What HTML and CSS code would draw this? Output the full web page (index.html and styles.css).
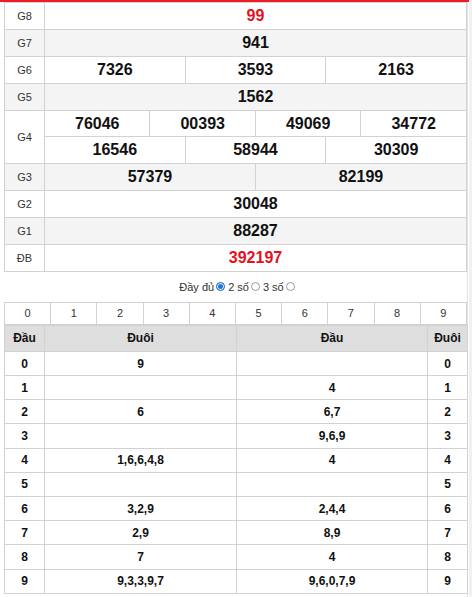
FILE: index.html
```html
<!DOCTYPE html>
<html>
<head>
<meta charset="utf-8">
<link rel="stylesheet" href="styles.css">
</head>
<body>
<div class="page">
  <div class="box">
    <table class="kq">
      <colgroup>
        <col class="lab">
        <col span="12">
      </colgroup>
      <tr><td class="g">G8</td><td colspan="12" class="num red">99</td></tr>
      <tr class="alt"><td class="g">G7</td><td colspan="12" class="num">941</td></tr>
      <tr><td class="g">G6</td><td colspan="4" class="num">7326</td><td colspan="4" class="num">3593</td><td colspan="4" class="num">2163</td></tr>
      <tr class="alt"><td class="g">G5</td><td colspan="12" class="num">1562</td></tr>
      <tr><td class="g" rowspan="2">G4</td><td colspan="3" class="num">76046</td><td colspan="3" class="num">00393</td><td colspan="3" class="num">49069</td><td colspan="3" class="num">34772</td></tr>
      <tr><td colspan="4" class="num">16546</td><td colspan="4" class="num">58944</td><td colspan="4" class="num">30309</td></tr>
      <tr class="alt"><td class="g">G3</td><td colspan="6" class="num">57379</td><td colspan="6" class="num">82199</td></tr>
      <tr><td class="g">G2</td><td colspan="12" class="num">30048</td></tr>
      <tr class="alt"><td class="g">G1</td><td colspan="12" class="num">88287</td></tr>
      <tr><td class="g">ĐB</td><td colspan="12" class="num red">392197</td></tr>
    </table>

    <div class="opts">
      <span>Đầy đủ</span><span class="radio on"></span>
      <span>2 số</span><span class="radio"></span>
      <span>3 số</span><span class="radio"></span>
    </div>

    <table class="digits">
      <tr><td>0</td><td>1</td><td>2</td><td>3</td><td>4</td><td>5</td><td>6</td><td>7</td><td>8</td><td>9</td></tr>
    </table>

    <table class="loto">
      <colgroup>
        <col class="c1"><col class="c2"><col class="c3"><col class="c4">
      </colgroup>
      <tr class="head"><th>Đầu</th><th>Đuôi</th><th>Đầu</th><th>Đuôi</th></tr>
      <tr><td>0</td><td>9</td><td></td><td>0</td></tr>
      <tr><td>1</td><td></td><td>4</td><td>1</td></tr>
      <tr><td>2</td><td>6</td><td>6,7</td><td>2</td></tr>
      <tr><td>3</td><td></td><td>9,6,9</td><td>3</td></tr>
      <tr><td>4</td><td>1,6,6,4,8</td><td>4</td><td>4</td></tr>
      <tr><td>5</td><td></td><td></td><td>5</td></tr>
      <tr><td>6</td><td>3,2,9</td><td>2,4,4</td><td>6</td></tr>
      <tr><td>7</td><td>2,9</td><td>8,9</td><td>7</td></tr>
      <tr><td>8</td><td>7</td><td>4</td><td>8</td></tr>
      <tr><td>9</td><td>9,3,3,9,7</td><td>9,6,0,7,9</td><td>9</td></tr>
    </table>
  </div>
</div>
</body>
</html>
```

FILE: styles.css
```css
html, body {
  margin: 0;
  padding: 0;
}
body {
  background: #f1f1f1;
  font-family: "Liberation Sans", Arial, sans-serif;
  color: #222;
}
.page {
  width: 469px;
  background: #fff;
  border-top: 2px solid #ee1c25;
  min-height: 595px;
}
.box {
  margin-left: 4px;
  width: 463px;
  border-right: 1px solid #e2e2e2;
  min-height: 595px;
}
table {
  border-collapse: collapse;
  width: 463px;
  table-layout: fixed;
}
td, th {
  border: 1px solid #d2d2d2;
  padding: 0;
  text-align: center;
}
.kq tr {
  height: 26.9px;
}
.kq col.lab {
  width: 40px;
}
.kq .alt {
  background: #f4f4f4;
}
.g {
  font-size: 11px;
  color: #333;
}
.num {
  font-size: 16px;
  font-weight: bold;
  color: #111;
}
.num.red {
  color: #e50f1e;
}
.opts {
  height: 30px;
  display: flex;
  align-items: center;
  justify-content: center;
  gap: 2px;
  font-size: 11px;
  color: #333;
  padding-left: 4px;
  box-sizing: border-box;
}
.radio {
  width: 7px;
  height: 7px;
  border: 1px solid #9a9a9a;
  border-radius: 50%;
  background: #fff;
  margin-right: 1px;
}
.radio.on {
  border-color: #1e74d8;
  background: #1e74d8;
  box-shadow: inset 0 0 0 1px #fff;
}
.digits tr {
  height: 22px;
}
.digits td {
  font-size: 11px;
  color: #333;
}
.loto col.c1 { width: 40px; }
.loto col.c2 { width: 192px; }
.loto col.c3 { width: 191px; }
.loto col.c4 { width: 40px; }
.loto tr {
  height: 24.2px;
}
.loto tr.head {
  height: 26px;
  background: #dedede;
}
.loto th, .loto td {
  font-size: 12px;
  font-weight: bold;
  color: #111;
}
```
